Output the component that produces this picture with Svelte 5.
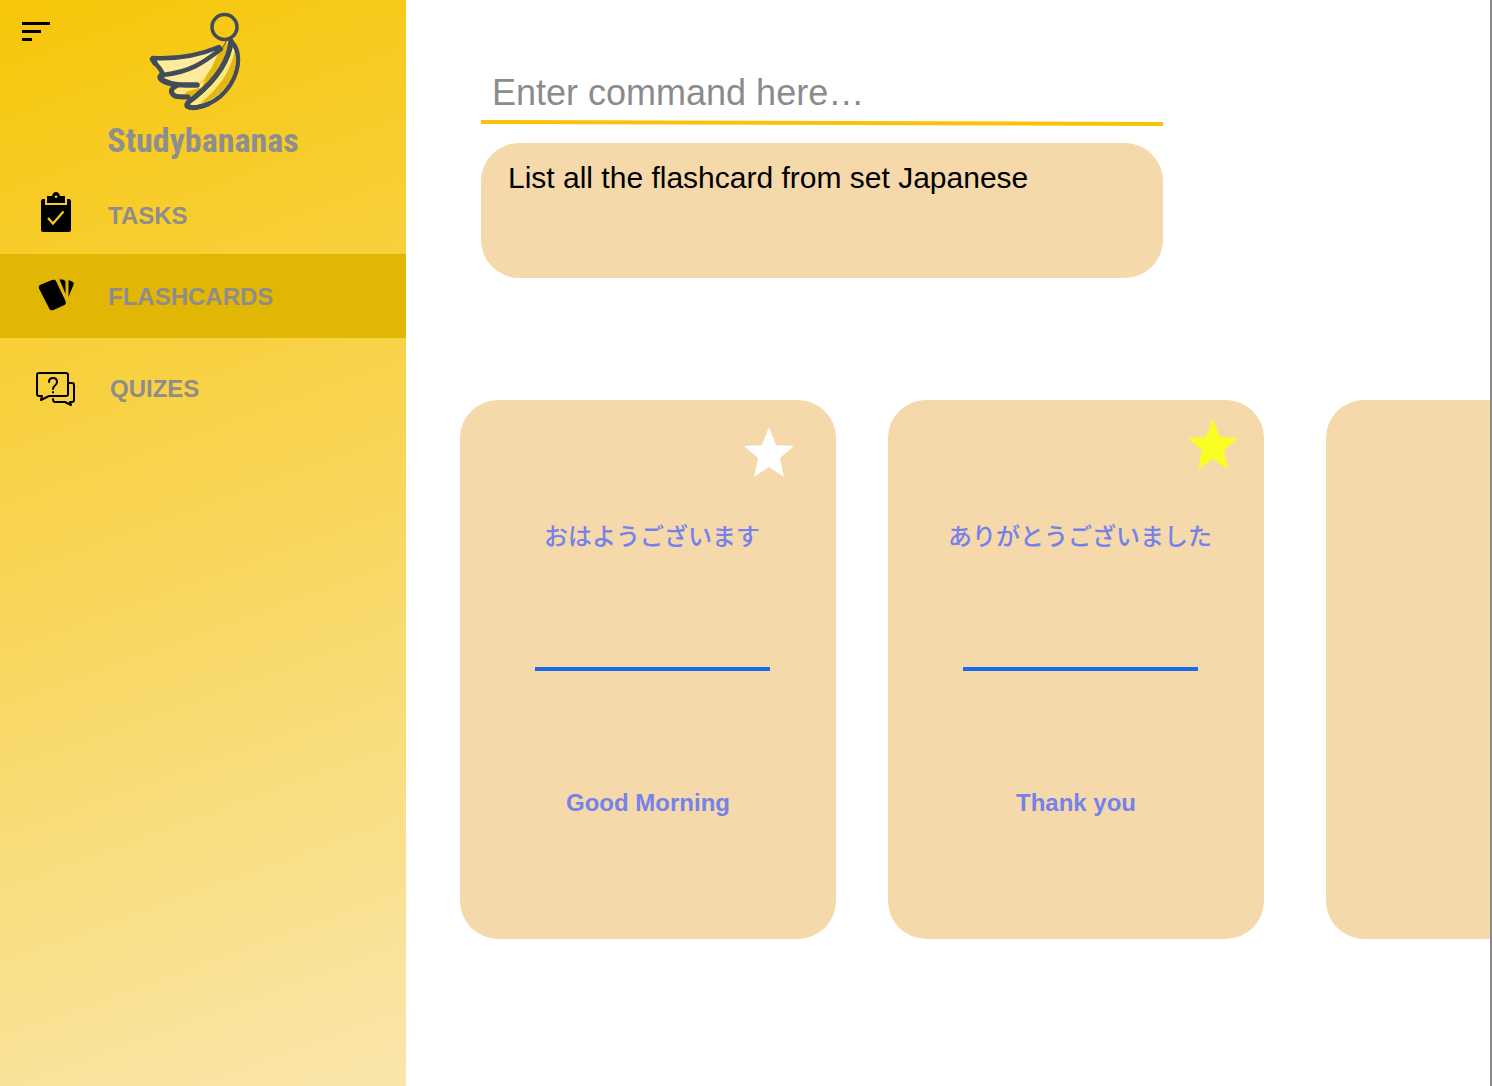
<script>
  let command = $state('');
  let cards = $state([
    { front: 'おはようございます', back: 'Good Morning', starred: false },
    { front: 'ありがとうございました', back: 'Thank you', starred: true }
  ]);
</script>

<div class="app">
  <aside class="sidebar">
    <button class="menu" aria-label="Menu">
      <svg viewBox="0 0 28 20" width="28" height="20" aria-hidden="true">
        <path d="M0 0h28v3H0zM0 8h19v3H0zM0 16h10v3H0z" />
      </svg>
    </button>
    <div class="brand">
      <svg class="logo" viewBox="0 0 110 110" width="110" height="110" aria-hidden="true">
        <g stroke="#424c58" stroke-width="4.500" stroke-linejoin="round" stroke-linecap="round">
          <path fill="#ffe87c" stroke="none" d="M33 83L58 80L75 70L50 93L36 91Z" />
          <path fill="#e2b714" stroke="none" d="M45 90L46 87L62 82L68 68L84 40L89 38L87 52L75 74L54 93Z" />
          <path fill="#ffeb9c" stroke="none" d="M21 72L79 45L72 62L63 75L57 80L34 79Z" />
          <path fill="#ffeb9c" d="M13 53C30 54 55 52 79 42L81 44C63 58 50 67 23 70C21 62 15 60 13 55Z" />
          <path fill="none" d="M12.500 54L15 58M23 70C18 71 19 75 29 78C38 81 45 80 57 80" stroke-width="5.500" />
          <path fill="none" d="M36 81C30 84 30 88 35 91C39 92 44 92 48 92" stroke-width="5" />
          <path fill="#ffe87c" d="M91 36C89 58 72 78 55 92C50 96 46 98 47 101C52 104 61 102 68 99C87 91 98 71 98 54C98 45 95 40 91 36Z" />
          <path fill="#e2b714" stroke="none" d="M94.500 46C90 70 76 85 60 98.500C80 94 95 76 96 56Z" />
          <path fill="none" stroke-width="5" d="M91 36C89 58 72 78 55 92C50 96 46 98 47 101C52 104 61 102 68 99" />
          <path fill="none" stroke-width="1" d="M83 42L87 35" />
          <circle cx="84.500" cy="22" r="12.500" fill="none" stroke-width="3.500" />
        </g>
      </svg>
      <h1>Studybananas</h1>
    </div>
    <nav>
      <a href="#tasks" class="tasks">
        <svg viewBox="0 0 40 44" width="40" height="44" aria-hidden="true">
          <path d="M9 6v6h22V6h2q2 0 2 2v29q0 2-2 2H7q-2 0-2-2V8q0-2 2-2z" />
          <path fill-rule="evenodd" d="M11 3h5q1-4 4-4t4 4h5v7H11zM20 2.500a1.300 1.300 0 1 0 .1 0z" />
          <path d="M12 25l5 5.500L27.500 18.500" fill="none" stroke="#f7cb25" stroke-width="2.200" />
        </svg>
        <span>TASKS</span>
      </a>
      <a href="#flashcards" class="flashcards" aria-current="page">
        <svg viewBox="0 0 40 44" width="40" height="44" aria-hidden="true">
          <path d="M5 10.500L16 6q3-1 4 1l9.500 20q1 3-1 4l-11 5q-3 1-4-1L3 14.500q-1-3 2-4z" />
          <path d="M23.500 5.500H26q3 0 3.500 2.500v12zM32.500 6l4 1.700q2 1 1 3L32.500 23z" />
        </svg>
        <span>FLASHCARDS</span>
      </a>
      <a href="#quizes" class="quizes">
        <svg viewBox="0 0 40 44" width="40" height="44" fill="none" stroke="#000" stroke-width="2" stroke-linejoin="round" stroke-linecap="round" aria-hidden="true">
          <path d="M3 7h27q2 0 2 2v19q0 2-2 2H13l-8 4 1-4H3q-2 0-2-2V9q0-2 2-2z" />
          <path d="M33 17h3q2 0 2 2v15q0 2-2 2h-2l1 3-6-3H19q-2 0-2-3" />
          <path d="M13 16q0-4 4-4t4 4q0 2-2 3.500t-2 3.500M17 26v.5" />
        </svg>
        <span>QUIZES</span>
      </a>
    </nav>
  </aside>

  <main>
    <form class="command" onsubmit={(e) => e.preventDefault()}>
      <input type="text" aria-label="Command" placeholder="Enter command here…" bind:value={command} />
      <svg class="rule" viewBox="0 0 682 6" preserveAspectRatio="none" aria-hidden="true">
        <path d="M0 2L682 4" stroke="#f8c40a" stroke-width="4" />
      </svg>
      <p class="suggestion">List all the flashcard from set Japanese</p>
    </form>

    <section class="deck" aria-label="Flashcards">
      <div class="current">
        {#each cards as card}
          <article class="card">
            <button
              class="star"
              class:starred={card.starred}
              aria-label="Star this card"
              aria-pressed={card.starred}
              onclick={() => (card.starred = !card.starred)}
            >
              <svg viewBox="0 0 50 50" width="50" height="50" aria-hidden="true">
                <path d="M25 0L32 18L50 19L36 31L40 50L25 40L10 50L14 31L0 19L18 18Z" />
              </svg>
            </button>
            <div class="question">
              <p lang="ja">{card.front}</p>
              <hr />
            </div>
            <p>{card.back}</p>
          </article>
        {/each}
      </div>
      <article class="card" aria-label="Next card"></article>
    </section>
  </main>
</div>

<style>
  :global(body) {
    margin: 0;
    background: #fff;
  }

  .app {
    display: flex;
    min-height: 100vh;
    font-family: 'Liberation Sans', Arial, sans-serif;
  }

  button {
    padding: 0;
    border: 0;
    background: none;
    cursor: pointer;
  }

  svg {
    display: block;
    overflow: visible;
  }

  h1,
  p {
    margin: 0;
  }

  .sidebar {
    position: relative;
    flex: 0 0 406px;
    background: linear-gradient(160deg, #f7c608, #fae6ac);
  }

  .menu {
    position: absolute;
    top: 22px;
    left: 22px;
  }

  .brand {
    display: flex;
    flex-direction: column;
    align-items: center;
    padding: 5px 0 10px;
  }

  .logo {
    margin-right: 16px;
  }

  h1 {
    font: bold 34px/50px 'Roboto Condensed', 'Liberation Sans', sans-serif;
    color: #8e8e8e;
  }

  nav a {
    display: flex;
    align-items: center;
    gap: 32px;
    height: 84px;
    padding-left: 36px;
    color: #8f8c8c;
    font-size: 24px;
    font-weight: bold;
    text-decoration: none;
  }

  nav span {
    padding-top: 2px;
  }

  nav .tasks {
    height: 79px;
  }

  nav .flashcards {
    background: #e2b604;
  }

  nav .quizes {
    height: 100px;
    gap: 34px;
  }

  main {
    flex: 1;
    min-width: 0;
    overflow: hidden;
    border-right: 2px solid #8b8b8b;
  }

  .command {
    max-width: 682px;
    margin: 64px 0 0 75px;
  }

  input {
    box-sizing: border-box;
    display: block;
    width: 100%;
    height: 56px;
    padding: 2px 11px 0;
    border: 0;
    outline: 0;
    background: none;
    color: #000;
    font: 36px 'Liberation Sans', Arial, sans-serif;
  }

  input::placeholder {
    color: #8b8b8b;
    opacity: 1;
  }

  .rule {
    width: 100%;
    height: 6px;
  }

  .suggestion {
    box-sizing: border-box;
    min-height: 135px;
    margin-top: 17px;
    padding: 18px 27px;
    border-radius: 38px;
    background: #f5d9aa;
    font-size: 30px;
    line-height: 34px;
  }

  .deck {
    display: flex;
    gap: 62px;
    margin: 122px 0 0 54px;
  }

  .current {
    display: flex;
    gap: 52px;
  }

  .card {
    position: relative;
    box-sizing: border-box;
    display: flex;
    flex-direction: column;
    align-items: center;
    flex: 0 0 376px;
    min-height: 539px;
    padding-top: 117px;
    border-radius: 38px;
    background: #f5d9aa;
    color: #7582eb;
    font-size: 24px;
    font-weight: bold;
    line-height: 36px;
    text-align: center;
  }

  .question {
    padding-left: 8px;
    font-family: 'Noto Sans CJK JP', sans-serif;
    font-weight: 500;
  }

  hr {
    width: 235px;
    height: 4px;
    margin: 114px auto;
    border: 0;
    background: #1a6ae8;
  }

  .star {
    position: absolute;
    top: 27px;
    right: 42px;
    fill: #fff;
  }

  .starred {
    top: 19px;
    right: 26px;
    fill: #f9ff24;
  }
</style>
